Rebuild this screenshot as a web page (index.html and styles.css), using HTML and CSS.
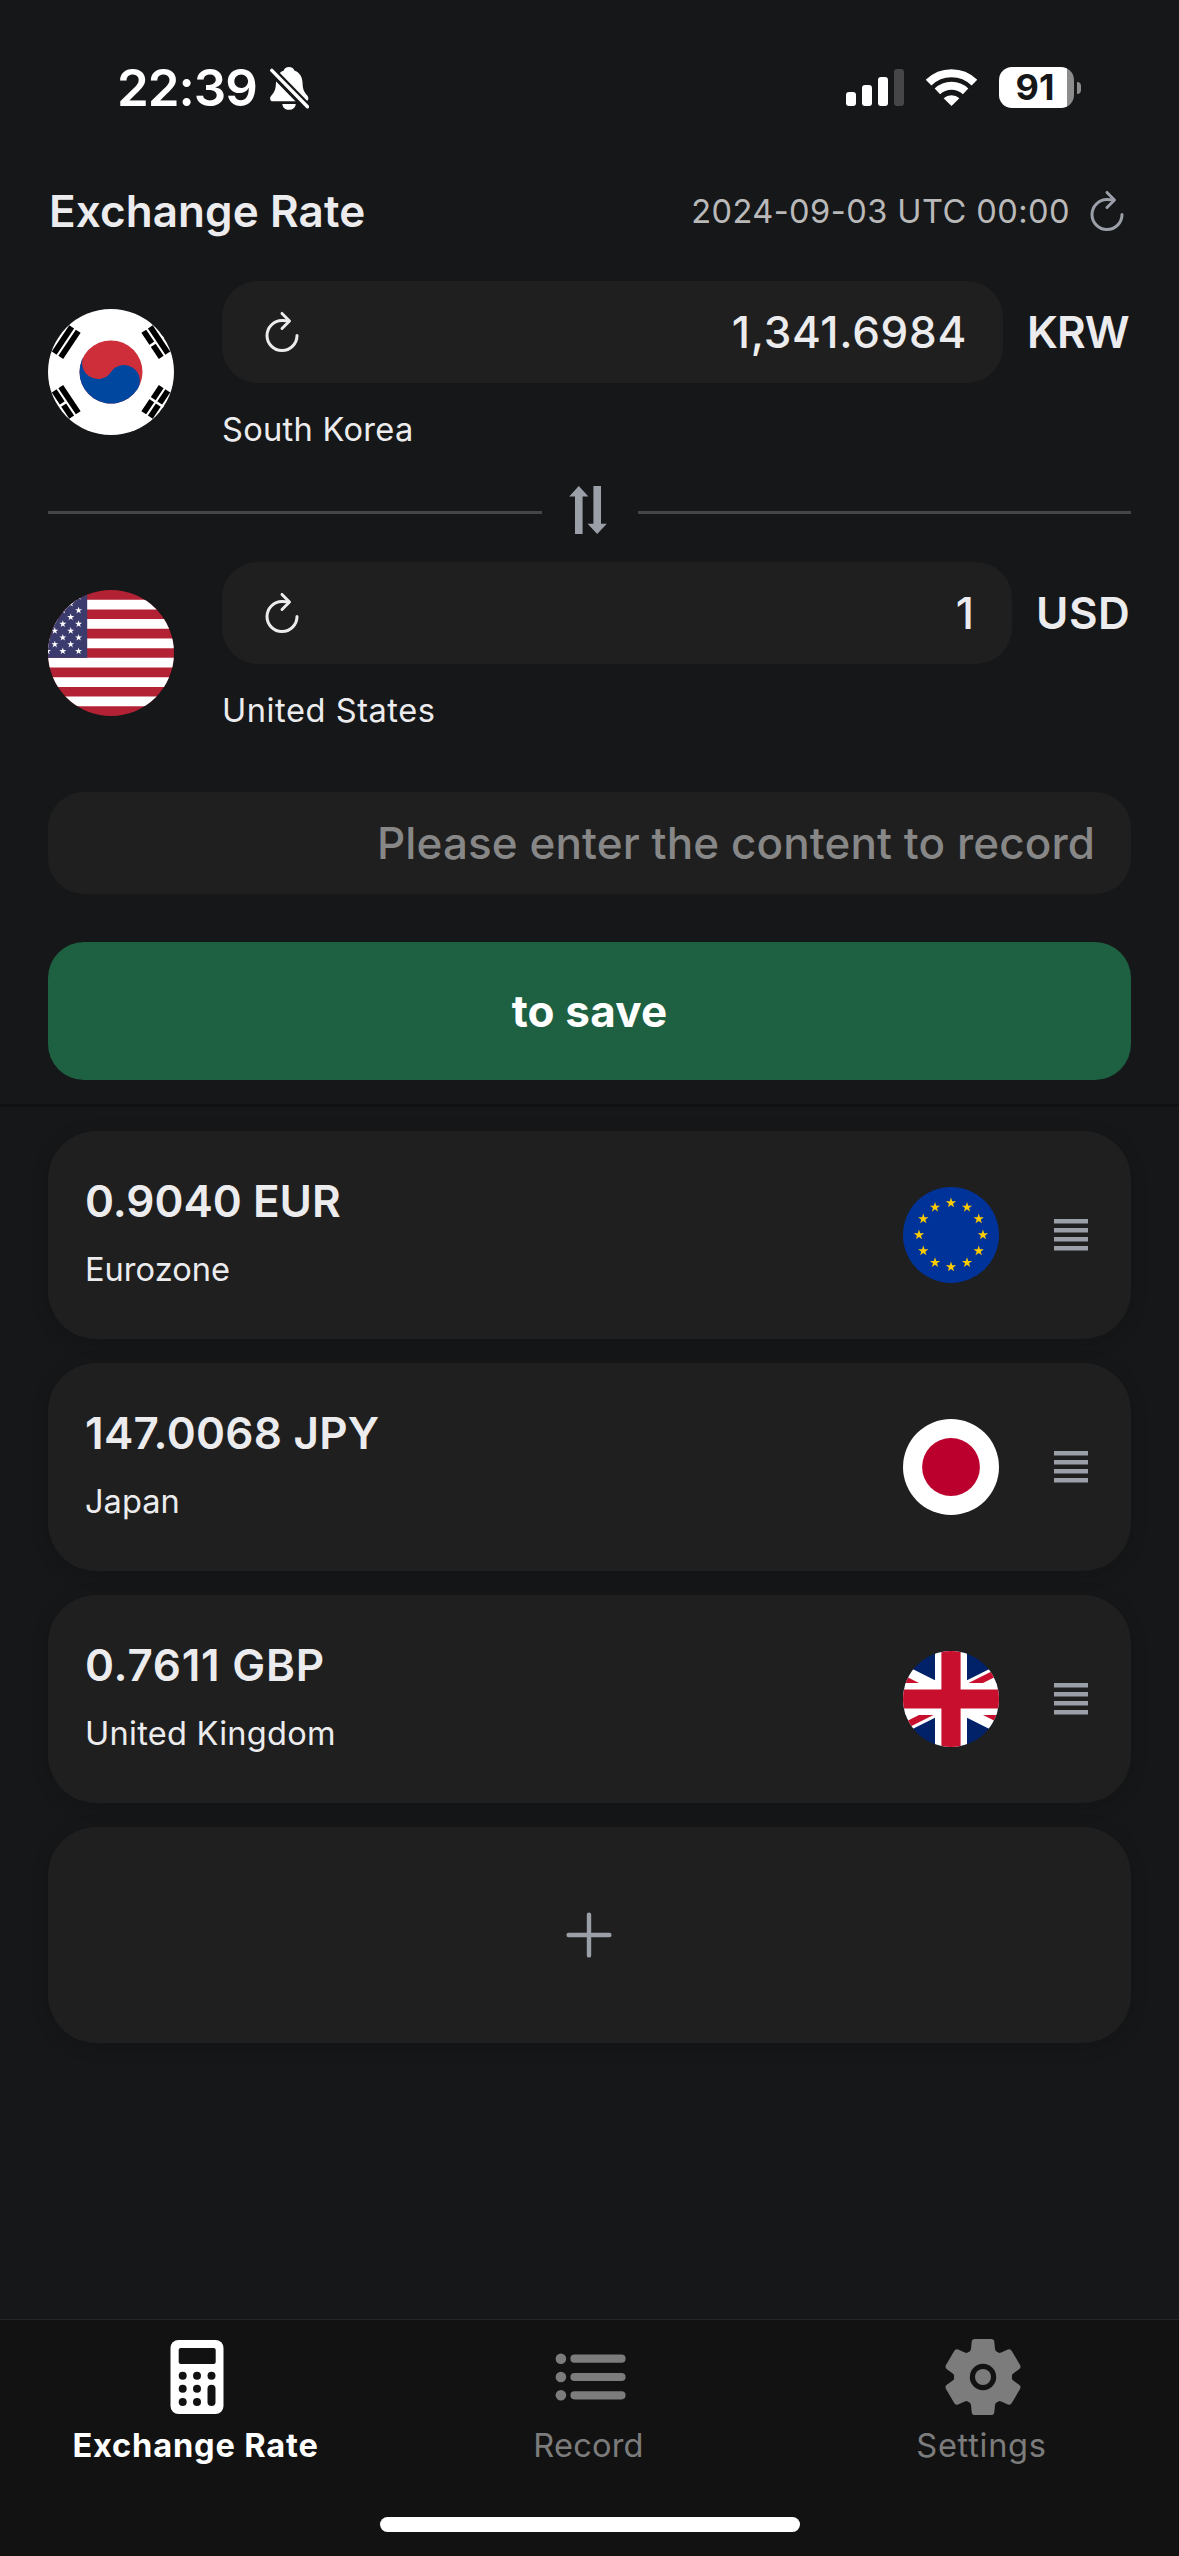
FILE: index.html
```html
<!DOCTYPE html>
<html lang="en">
<head>
<meta charset="utf-8">
<title>Exchange Rate</title>
<link rel="stylesheet" href="styles.css">
</head>
<body>
<svg class="defs" aria-hidden="true">
  <defs>
    <symbol id="refresh" viewBox="0 0 512 512">
      <path d="M320 146s24.36-12-64-12a160 160 0 1 0 160 160" fill="none" stroke="currentColor" stroke-width="32" stroke-linecap="round" stroke-miterlimit="10"/>
      <path d="M256 58l80 80-80 80" fill="none" stroke="currentColor" stroke-width="32" stroke-linecap="round" stroke-linejoin="round"/>
    </symbol>
    <symbol id="handle" viewBox="0 0 34 32">
      <path d="M0 2.3H34M0 11.3H34M0 20.3H34M0 29.3H34" stroke="currentColor" stroke-width="4.4"/>
    </symbol>
    <polygon id="star" points="0,-1 .2245,-.309 .951,-.309 .363,.118 .588,.809 0,.382 -.588,.809 -.363,.118 -.951,-.309 -.2245,-.309"/>
  </defs>
</svg>

<div class="app">
  <header class="status">
    <span class="time">22:39</span>
    <svg class="bell" viewBox="0 0 39 43">
      <path fill="#fff" d="M19 0C21.800 0 23.800 1.400 24.300 3.500C29.500 5.400 32.300 9.800 32.500 15.500C32.700 23 34.500 25.500 37.500 28.700C39 30.500 38.600 34.300 35.500 34.300H3C-.3 34.300-.6 30.700 1 28.900C4 25.500 5.800 23 6 15.500C6.200 9.800 9 5.400 13.800 3.500C14.300 1.400 16.200 0 19 0ZM12.300 37H25.800C25.400 40.600 22.700 42.800 19 42.800S12.700 40.600 12.300 37Z"/>
      <path d="M-1 1L40 43" stroke="#161719" stroke-width="8.600"/>
      <path d="M1.800 3.400L37.500 39.700" stroke="#fff" stroke-width="3.400" stroke-linecap="round"/>
    </svg>
    <div class="indicators">
      <svg class="signal" viewBox="0 0 58 37" fill="#fff">
        <rect y="23" width="10" height="14" rx="3"/>
        <rect x="16" y="16" width="10" height="21" rx="3"/>
        <rect x="32" y="8" width="10" height="29" rx="3"/>
        <rect x="48" width="10" height="37" rx="3" fill="#464648"/>
      </svg>
      <svg class="wifi" viewBox="0 0 51 37">
        <g fill="none" stroke="#fff">
          <path d="M2.600 13.600A32.600 32.600 0 0 1 48.400 13.600" stroke-width="8"/>
          <path d="M11.400 22.400A20.400 20.400 0 0 1 39.600 22.400" stroke-width="7.800"/>
        </g>
        <path fill="#fff" d="M25.500 37L17.600 29.200A11.700 11.700 0 0 1 33.400 29.200Z"/>
      </svg>
      <div class="battery-wrap">
        <div class="battery">91</div>
        <div class="nub"></div>
      </div>
    </div>
  </header>

  <div class="title-row">
    <h1>Exchange Rate</h1>
    <div class="updated"><span>2024-09-03 UTC 00:00</span><svg class="icon48"><use href="#refresh"/></svg></div>
  </div>

  <main>
    <section class="currency">
      <svg class="flag-lg" viewBox="-24 -24 48 48">
        <rect x="-24" y="-24" width="48" height="48" fill="#fff"/>
        <g transform="rotate(-56.31)">
          <g id="kr-bars"><path id="kr-tri" d="M-6-25H6M-6-22H6M-6-19H6" stroke="#000" stroke-width="2.200"/><use href="#kr-tri" y="44"/></g>
          <path stroke="#fff" d="M0 17v10"/>
          <circle r="12" fill="#cd2e3a"/>
          <path fill="#0047a0" d="M0-12A6 6 0 0 0 0 0A6 6 0 0 1 0 12A12 12 0 0 1 0-12Z"/>
        </g>
        <g transform="rotate(-123.69)">
          <use href="#kr-bars"/>
          <path stroke="#fff" d="M0-23.500v3M0 17v3.500M0 23.500v3"/>
        </g>
      </svg>
      <div class="amount-area">
        <div class="amount-row">
          <div class="field"><svg class="icon48"><use href="#refresh"/></svg><span class="amount">1,341.6984</span></div>
          <span class="code krw">KRW</span>
        </div>
        <div class="country">South Korea</div>
      </div>
    </section>

    <div class="divider">
      <i></i>
      <svg class="swap" viewBox="0 0 38 48"><path fill="currentColor" d="M9.800 0L19.400 10.500H13.600V48H6V10.500H.2ZM28.200 48L18.600 37.800H24.400V0H32V37.800H37.800Z"/></svg>
      <i></i>
    </div>

    <section class="currency">
      <svg class="flag-lg" viewBox="0 0 126 126">
        <rect width="126" height="126" fill="#b22234"/>
        <path d="M0 14.540H126M0 33.920H126M0 53.310H126M0 72.690H126M0 92.080H126M0 111.460H126" stroke="#fff" stroke-width="9.690"/>
        <rect width="39.200" height="67.850" fill="#3c3b6e"/>
        <g fill="#fff">
          <use href="#star" transform="translate(30.600 6.800) scale(3.700)"/>
          <use href="#star" transform="translate(22.700 13.600) scale(3.700)"/>
          <use href="#star" transform="translate(14.800 20.400) scale(3.700)"/><use href="#star" transform="translate(30.600 20.400) scale(3.700)"/>
          <use href="#star" transform="translate(22.700 27.200) scale(3.700)"/>
          <use href="#star" transform="translate(14.800 34) scale(3.700)"/><use href="#star" transform="translate(30.600 34) scale(3.700)"/>
          <use href="#star" transform="translate(6.800 40.800) scale(3.700)"/><use href="#star" transform="translate(22.700 40.800) scale(3.700)"/>
          <use href="#star" transform="translate(14.800 47.600) scale(3.700)"/><use href="#star" transform="translate(30.600 47.600) scale(3.700)"/>
          <use href="#star" transform="translate(6.800 54.400) scale(3.700)"/><use href="#star" transform="translate(22.700 54.400) scale(3.700)"/>
          <use href="#star" transform="translate(14.800 61.200) scale(3.700)"/><use href="#star" transform="translate(30.600 61.200) scale(3.700)"/><use href="#star" transform="translate(-.5 61.200) scale(3.700)"/>
        </g>
      </svg>
      <div class="amount-area">
        <div class="amount-row">
          <div class="field"><svg class="icon48"><use href="#refresh"/></svg><span class="amount one">1</span></div>
          <span class="code usd">USD</span>
        </div>
        <div class="country us">United States</div>
      </div>
    </section>

    <div class="field memo"><span>Please enter the content to record</span></div>
    <button class="save">to save</button>
  </main>

  <section class="list">
    <article class="card">
      <div class="info"><div class="rate">0.9040 EUR</div><div class="region">Eurozone</div></div>
      <svg class="flag-md" viewBox="-48 -48 96 96">
        <rect x="-48" y="-48" width="96" height="96" fill="#039"/>
        <g fill="#fc0">
          <use href="#star" transform="translate(0 -32) scale(5.400)"/><use href="#star" transform="translate(16 -27.700) scale(5.400)"/><use href="#star" transform="translate(27.700 -16) scale(5.400)"/>
          <use href="#star" transform="translate(32 0) scale(5.400)"/><use href="#star" transform="translate(27.700 16) scale(5.400)"/><use href="#star" transform="translate(16 27.700) scale(5.400)"/>
          <use href="#star" transform="translate(0 32) scale(5.400)"/><use href="#star" transform="translate(-16 27.700) scale(5.400)"/><use href="#star" transform="translate(-27.700 16) scale(5.400)"/>
          <use href="#star" transform="translate(-32 0) scale(5.400)"/><use href="#star" transform="translate(-27.700 -16) scale(5.400)"/><use href="#star" transform="translate(-16 -27.700) scale(5.400)"/>
        </g>
      </svg>
      <svg class="handle"><use href="#handle"/></svg>
    </article>
    <article class="card">
      <div class="info"><div class="rate jpy">147.0068 JPY</div><div class="region">Japan</div></div>
      <svg class="flag-md" viewBox="0 0 96 96"><rect width="96" height="96" fill="#fff"/><circle cx="48" cy="48" r="28.900" fill="#bc002d"/></svg>
      <svg class="handle"><use href="#handle"/></svg>
    </article>
    <article class="card">
      <div class="info"><div class="rate gbp">0.7611 GBP</div><div class="region uk">United Kingdom</div></div>
      <svg class="flag-md" viewBox="15 0 30 30">
        <clipPath id="uk"><path d="M30 15h30v15zv15H0zH0V0zV0h30z"/></clipPath>
        <rect width="60" height="30" fill="#012169"/>
        <path d="M0 0L60 30M60 0L0 30" stroke="#fff" stroke-width="6"/>
        <path d="M0 0L60 30M60 0L0 30" stroke="#c8102e" stroke-width="4" clip-path="url(#uk)"/>
        <path d="M30 0V30M0 15H60" stroke="#fff" stroke-width="10"/>
        <path d="M30 0V30M0 15H60" stroke="#c8102e" stroke-width="6"/>
      </svg>
      <svg class="handle"><use href="#handle"/></svg>
    </article>
    <div class="card add">
      <svg class="plus" viewBox="0 0 46 46"><path d="M23 2.600V43.400M2.600 23H43.400" stroke="currentColor" stroke-width="4.400" stroke-linecap="round"/></svg>
    </div>
  </section>

  <nav class="tabs">
    <div class="tab-row">
      <div class="tab active">
        <svg viewBox="-38 -38 76 76">
          <rect x="-26.500" y="-37" width="53" height="74" rx="8" fill="currentColor"/>
          <g fill="#121212">
            <rect x="-18.300" y="-29" width="37" height="16" rx="2"/>
            <circle cx="-14.300" cy="-1.300" r="4"/><circle cx="0" cy="-1.300" r="4"/><circle cx="14.500" cy="-1.300" r="4"/>
            <circle cx="-14.300" cy="11.800" r="4"/><circle cx="0" cy="11.800" r="4"/>
            <circle cx="-14.300" cy="25" r="4"/><circle cx="0" cy="25" r="4"/>
            <rect x="10.500" y="7.800" width="8" height="21.200" rx="4"/>
          </g>
        </svg>
        <span class="lbl-rate">Exchange Rate</span>
      </div>
      <div class="tab">
        <svg viewBox="-37.500 -38 76 76">
          <g fill="currentColor"><circle cx="-28.600" cy="-18.300" r="5.300"/><circle cx="-28.600" cy="0" r="5.300"/><circle cx="-28.600" cy="18.300" r="5.300"/></g>
          <path d="M-15-18.300H32M-15 0H32M-15 18.300H32" stroke="currentColor" stroke-width="8.200" stroke-linecap="round"/>
        </svg>
        <span class="lbl-record">Record</span>
      </div>
      <div class="tab">
        <svg viewBox="-38 -38 76 76" fill="currentColor">
          <circle r="29"/>
          <path id="tooth" d="M-15-24Q-12.500-25-12-28L-11.300-35.200Q-11-38-8.200-38H8.200Q11-38 11.300-35.200L12-28Q12.500-25 15-24V-10H-15Z"/>
          <use href="#tooth" transform="rotate(60)"/><use href="#tooth" transform="rotate(120)"/><use href="#tooth" transform="rotate(180)"/><use href="#tooth" transform="rotate(240)"/><use href="#tooth" transform="rotate(300)"/>
          <circle r="13.200" fill="#121212"/><circle r="8"/>
        </svg>
        <span class="lbl-settings">Settings</span>
      </div>
    </div>
    <div class="home"></div>
  </nav>
</div>
</body>
</html>
```

FILE: styles.css
```css
* { box-sizing: border-box; }
body {
  margin: 0;
  background: #161719;
  color: #ececee;
  font-family: Inter, "Liberation Sans", sans-serif;
}
svg { display: block; flex: none; }
.defs { position: absolute; width: 0; height: 0; }
.app {
  width: 1179px;
  height: 2556px;
  display: flex;
  flex-direction: column;
  overflow: hidden;
}

/* Status bar */
.status {
  height: 175px;
  padding: 0 98px 0 117px;
  display: flex;
  align-items: center;
  color: #fff;
}
.time { font-size: 51px; font-weight: 600; letter-spacing: -1px; }
.bell { width: 39px; height: 43px; margin: 2px 0 0 13px; }
.indicators { margin-left: auto; display: flex; align-items: center; gap: 22px; }
.signal { width: 58px; height: 37px; }
.wifi { width: 51px; height: 37px; }
.battery-wrap { display: flex; align-items: center; gap: 3px; }
.battery {
  width: 75px;
  height: 41px;
  border-radius: 13px;
  padding-right: 3px;
  background: linear-gradient(90deg, #fff 68px, #8c8c8d 68px);
  color: #161719;
  font-size: 36px;
  font-weight: 700;
  line-height: 41px;
  text-align: center;
}
.nub { width: 4px; height: 12px; border-radius: 0 4px 4px 0; background: #8c8c8d; }

/* Title */
.title-row {
  height: 72px;
  padding: 0 48px 0 49px;
  display: flex;
  align-items: center;
  justify-content: space-between;
}
h1 { margin: 0; font-size: 44px; font-weight: 600; letter-spacing: .1px; }
.updated {
  display: flex;
  align-items: center;
  gap: 13px;
  font-size: 32.6px;
  letter-spacing: .43px;
  color: #b9b9ba;
}
.updated svg { color: #9b9fa8; }
.icon48 { width: 48px; height: 48px; }

/* Converter */
main { padding: 34px 48px 24px; border-bottom: 3px solid #111; }
.currency { height: 182px; display: flex; align-items: center; gap: 48px; }
.flag-lg { width: 126px; height: 126px; border-radius: 50%; }
.amount-area { flex: 1; height: 182px; }
.amount-row { display: flex; align-items: center; gap: 24px; }
.field {
  flex: 1;
  height: 102px;
  padding: 0 36px;
  border-radius: 36px;
  background: #1f1f1f;
  display: flex;
  align-items: center;
  justify-content: space-between;
  font-size: 44px;
  font-weight: 500;
}
.amount { letter-spacing: .7px; }
.amount.one { letter-spacing: 2px; }
.code { font-size: 44px; font-weight: 600; }
.krw { width: 104px; letter-spacing: -1px; }
.usd { width: 95px; letter-spacing: .5px; }
.country { margin-top: 17px; font-size: 32.6px; line-height: 59px; letter-spacing: .3px; }
.country.us { letter-spacing: .55px; }
.divider {
  height: 99px;
  display: flex;
  align-items: center;
  color: #9b9fa8;
}
.divider i { width: 494px; height: 3px; background: #464646; }
.divider i:last-child { width: 493px; }
.swap { width: 38px; height: 48px; margin: -6px 31px 0 27px; }
.memo { margin-top: 48px; justify-content: flex-end; color: #878787; letter-spacing: .1px; }
.save {
  display: block;
  width: 100%;
  height: 138px;
  margin-top: 48px;
  padding: 0;
  border: 0;
  border-radius: 36px;
  background: #1e6042;
  color: #fff;
  font: 700 44px Inter, "Liberation Sans", sans-serif;
  letter-spacing: .2px;
}

/* Currency list */
.list { padding: 24px 48px 0; display: flex; flex-direction: column; gap: 24px; }
.card {
  height: 208px;
  padding: 0 43px 0 37px;
  border-radius: 48px;
  background: #1f1f1f;
  box-shadow: 0 3px 18px rgba(0, 0, 0, .16);
  display: flex;
  align-items: center;
}
.info { flex: 1; }
.rate { font-size: 44px; font-weight: 600; line-height: 68px; }
.rate.jpy { letter-spacing: .27px; }
.rate.gbp { letter-spacing: .75px; }
.region { font-size: 32.6px; line-height: 68px; }
.region.uk { letter-spacing: .25px; }
.flag-md { width: 96px; height: 96px; border-radius: 50%; }
.handle { width: 34px; height: 32px; margin-left: 55px; color: #9b9fa8; }
.add { height: 216px; padding: 0 1px 0 0; justify-content: center; }
.plus { width: 46px; height: 46px; color: #9b9fa8; }

/* Tab bar */
.tabs {
  height: 237px;
  margin-top: auto;
  padding-top: 19px;
  border-top: 1px solid #252628;
  background: #121212;
}
.tab-row { display: grid; grid-template-columns: repeat(3, 1fr); }
.tab {
  display: flex;
  flex-direction: column;
  align-items: center;
  gap: 10px;
  color: #7c7c7c;
  font-size: 32.6px;
  line-height: 40px;
}
.tab svg { width: 76px; height: 76px; }
.tab span { margin-right: 2px; }
.tab.active { color: #fff; font-weight: 700; }
.lbl-rate { letter-spacing: .82px; }
.lbl-record { letter-spacing: .2px; }
.lbl-settings { letter-spacing: .7px; }
.home { width: 420px; height: 15px; margin: 52px auto 0; border-radius: 8px; background: #fff; }
```
